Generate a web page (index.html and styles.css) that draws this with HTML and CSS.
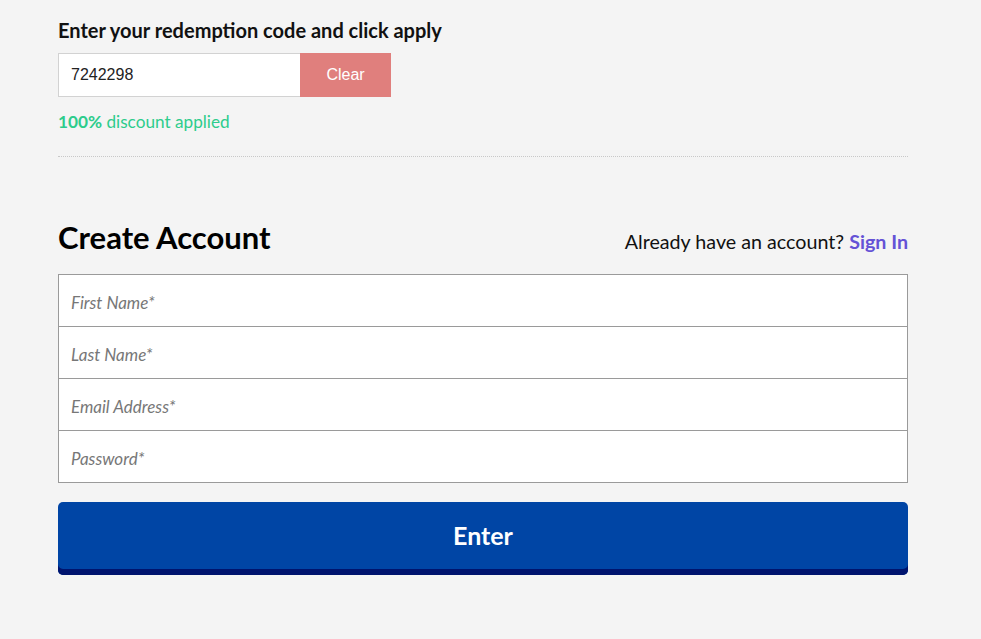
FILE: index.html
```html
<!DOCTYPE html>
<html>
<head>
<meta charset="utf-8">
<link rel="stylesheet" href="styles.css">
</head>
<body>
<div class="page">
  <section class="redeem">
    <h2 class="redeem-title">Enter your redemption code and click apply</h2>
    <div class="code-row">
      <input class="code-input" type="text" value="7242298">
      <button class="clear-btn">Clear</button>
    </div>
    <p class="discount"><strong>100%</strong> discount applied</p>
  </section>
  <section class="account">
    <div class="account-head">
      <h1 class="account-title">Create Account</h1>
      <p class="signin">Already have an account? <a href="#">Sign In</a></p>
    </div>
    <div class="fields">
      <input class="field" type="text" placeholder="First Name*">
      <input class="field" type="text" placeholder="Last Name*">
      <input class="field" type="email" placeholder="Email Address*">
      <input class="field" type="password" placeholder="Password*">
    </div>
    <button class="enter-btn">Enter</button>
  </section>
</div>
</body>
</html>
```

FILE: styles.css
```css
* { box-sizing: border-box; }
html, body { margin: 0; padding: 0; }
body {
  background: #f4f4f4;
  font-family: Lato, "Liberation Sans", sans-serif;
  color: #111;
}
.page {
  width: 850px;
  margin-left: 58px;
  padding-top: 17px;
}
.redeem {
  border-bottom: 1px dotted #c8c8c8;
  padding-bottom: 23px;
}
.redeem-title {
  margin: 0 0 10px;
  font-size: 20px;
  font-weight: 700;
  line-height: 26px;
  color: #111;
}
.code-row { display: flex; }
.code-input {
  width: 242px;
  height: 44px;
  border: 1px solid #d2d2d2;
  border-right: none;
  background: #fff;
  padding: 0 12px;
  font-family: "Liberation Sans", Arial, sans-serif;
  font-size: 16px;
  color: #222;
  outline: none;
}
.clear-btn {
  width: 91px;
  height: 44px;
  border: none;
  background: #e07f7d;
  color: #fff;
  font-family: "Liberation Sans", Arial, sans-serif;
  font-size: 16px;
  padding: 0;
}
.discount {
  margin: 14px 0 0;
  font-size: 17.2px;
  line-height: 22px;
  color: #2dcc8c;
}
.discount strong { font-weight: 700; }
.account { padding-top: 60px; }
.account-head {
  display: flex;
  justify-content: space-between;
  align-items: flex-end;
  margin-bottom: 17px;
}
.account-title {
  margin: 0;
  font-size: 31px;
  font-weight: 700;
  line-height: 40px;
  color: #000;
}
.signin {
  margin: 0 0 2px;
  font-size: 19.7px;
  line-height: 26px;
  color: #111;
}
.signin a {
  color: #6552d6;
  font-weight: 700;
  text-decoration: none;
}
.fields {
  display: flex;
  flex-direction: column;
  border: 1px solid #9a9a9a;
  background: #fff;
}
.field {
  height: 52px;
  border: none;
  border-top: 1px solid #9a9a9a;
  padding: 3px 12px 0;
  font-family: Lato, sans-serif;
  font-size: 17px;
  background: #fff;
  outline: none;
}
.field:first-child { border-top: none; height: 51px; }
.field::placeholder {
  color: #777;
  font-style: italic;
}
.enter-btn {
  display: block;
  width: 100%;
  height: 73px;
  margin-top: 19px;
  border: none;
  border-radius: 5px;
  background: #0045a5;
  box-shadow: inset 0 -6px 0 #00146e;
  color: #fff;
  font-family: Lato, sans-serif;
  font-size: 25px;
  font-weight: 700;
  padding: 0 0 7px;
}
```
